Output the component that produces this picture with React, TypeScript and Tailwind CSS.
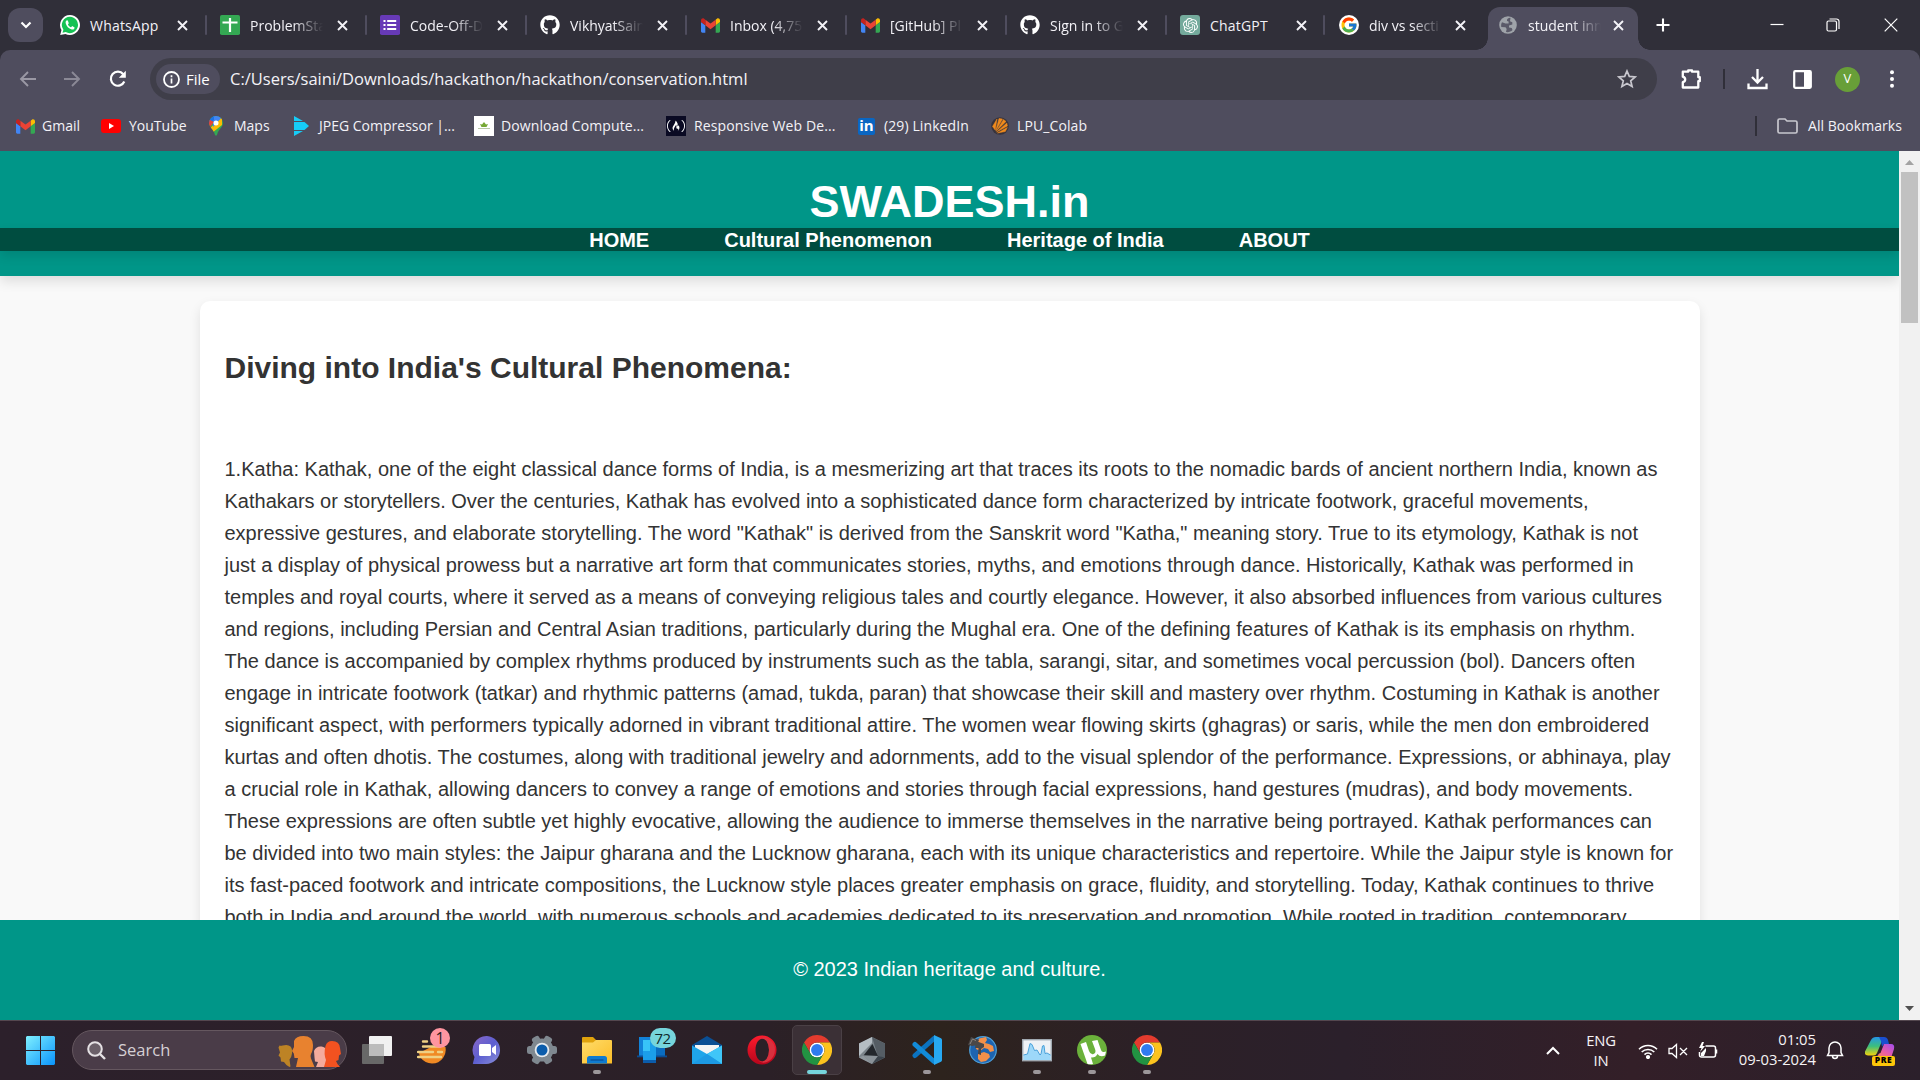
import type { ReactNode } from "react";
import { FaGithub } from "react-icons/fa";
import { FcGoogle } from "react-icons/fc";
import { SiFreecodecamp, SiOpenai } from "react-icons/si";

const LINES = [
  "1.Katha: Kathak, one of the eight classical dance forms of India, is a mesmerizing art that traces its roots to the nomadic bards of ancient northern India, known as",
  "Kathakars or storytellers. Over the centuries, Kathak has evolved into a sophisticated dance form characterized by intricate footwork, graceful movements,",
  'expressive gestures, and elaborate storytelling. The word "Kathak" is derived from the Sanskrit word "Katha," meaning story. True to its etymology, Kathak is not',
  "just a display of physical prowess but a narrative art form that communicates stories, myths, and emotions through dance. Historically, Kathak was performed in",
  "temples and royal courts, where it served as a means of conveying religious tales and courtly elegance. However, it also absorbed influences from various cultures",
  "and regions, including Persian and Central Asian traditions, particularly during the Mughal era. One of the defining features of Kathak is its emphasis on rhythm.",
  "The dance is accompanied by complex rhythms produced by instruments such as the tabla, sarangi, sitar, and sometimes vocal percussion (bol). Dancers often",
  "engage in intricate footwork (tatkar) and rhythmic patterns (amad, tukda, paran) that showcase their skill and mastery over rhythm. Costuming in Kathak is another",
  "significant aspect, with performers typically adorned in vibrant traditional attire. The women wear flowing skirts (ghagras) or saris, while the men don embroidered",
  "kurtas and often dhotis. The costumes, along with traditional jewelry and adornments, add to the visual splendor of the performance. Expressions, or abhinaya, play",
  "a crucial role in Kathak, allowing dancers to convey a range of emotions and stories through facial expressions, hand gestures (mudras), and body movements.",
  "These expressions are often subtle yet highly evocative, allowing the audience to immerse themselves in the narrative being portrayed. Kathak performances can",
  "be divided into two main styles: the Jaipur gharana and the Lucknow gharana, each with its unique characteristics and repertoire. While the Jaipur style is known for",
  "its fast-paced footwork and intricate compositions, the Lucknow style places greater emphasis on grace, fluidity, and storytelling. Today, Kathak continues to thrive",
  "both in India and around the world, with numerous schools and academies dedicated to its preservation and promotion. While rooted in tradition, contemporary",
];

/* ---------- brand icons ---------- */

const Gmail = () => (
  <svg className="w-[19px] h-[15px]" viewBox="52 42 88 66">
    <path fill="#4285f4" d="M58 108h14V74L52 59v43c0 3.32 2.69 6 6 6" />
    <path fill="#34a853" d="M120 108h14c3.32 0 6-2.69 6-6V59l-20 15" />
    <path fill="#fbbc04" d="M120 48v26l20-15v-8c0-7.42-8.47-11.65-14.4-7.2" />
    <path fill="#ea4335" d="M72 74V48l24 18 24-18v26L96 92" />
    <path fill="#c5221f" d="M52 51v8l20 15V48l-5.6-4.2c-5.94-4.45-14.4-.22-14.4 7.2" />
  </svg>
);

const Chrome = () => (
  <svg className="size-[30px]" viewBox="0 0 48 48">
    <circle cx="24" cy="24" r="12" fill="#fff" />
    <path fill="#e33b2e" d="M24 12H44.78a23.99 23.99 0 0 0-41.56 0L13.61 30l.01 0A11.98 11.98 0 0 1 24 12Z" />
    <path fill="#fcc31e" d="M34.39 30 24 48A23.99 23.99 0 0 0 44.78 12H24A11.98 11.98 0 0 1 34.39 30Z" />
    <path fill="#229342" d="M13.61 30 3.22 12A23.99 23.99 0 0 0 24 48L34.39 30a11.98 11.98 0 0 1-20.78 0Z" />
    <circle cx="24" cy="24" r="9.5" fill="#2f7bf0" />
  </svg>
);

const WhatsApp = () => (
  <svg className="size-5" viewBox="0 0 20 20">
    <path fill="#fff" d="M10 0a10 10 0 1 1-4.6 18.9L.2 20l1.3-4.9A10 10 0 0 1 10 0Z" />
    <path fill="#16c254" d="M10 1.7a8.2 8.2 0 1 1-4.3 15.3L2.5 17.8l.9-3A8.3 8.3 0 0 1 10 1.7Z" />
    <path fill="#fff" d="M6.9 5.3c-.9.5-1.5 1.5-1.2 2.9.7 3 3 5.3 6 6.2 1.7.5 2.9-.6 2.9-2l-2.4-1.3-1.1 1.2c-1.4-.6-2.5-1.6-3.2-2.9l.9-1.1-1-2.7Z" />
  </svg>
);

const Sheets = () => (
  <svg className="size-5" viewBox="0 0 20 20">
    <rect width="20" height="20" rx="1.8" fill="#34a853" />
    <path d="M10 3v14M2.5 7.5h15" stroke="#fff" strokeWidth="2.2" />
  </svg>
);

const Forms = () => (
  <svg className="size-5" viewBox="0 0 20 20">
    <rect width="20" height="20" rx="1.8" fill="#673ab7" />
    <path d="M7.2 6h9M7.2 10h9M7.2 14h9M3.5 6h2M3.5 10h2M3.5 14h2" stroke="#fff" strokeWidth="1.9" />
  </svg>
);

const GPT = () => (
  <span className="flex size-5 items-center justify-center rounded-[3px] bg-[#74aa9c]">
    <SiOpenai className="size-[15px] text-white" />
  </span>
);

const Google = () => (
  <span className="flex size-5 items-center justify-center rounded-full bg-white">
    <FcGoogle className="size-[18px]" />
  </span>
);

const Globe = () => (
  <svg className="size-[18px]" viewBox="0 0 18 18">
    <circle cx="9" cy="9" r="8.8" fill="#9fa3a9" />
    <path fill="#4f4d5e" d="M11.5 1.8C9 1.8 7.5 3.5 8 5l1.6.6v2H6.5L3 6.3C2 8 2 9.5 2.3 11l4.2.2 1.2 1.8-.7 3c2.5.5 5-.3 6.5-2l-.8-2-2.7-.6V9.400l3.300-1V6.200l-2.300-1Z" opacity=".85" />
  </svg>
);

const CloseX = () => (
  <svg className="size-[11px]" viewBox="0 0 11 11">
    <path d="M1 1l9 9M10 1l-9 9" stroke="#f3f2f7" strokeWidth="1.9" />
  </svg>
);

/* ---------- tab strip ---------- */

type Tab = { title: string; icon: ReactNode; full?: boolean };

const TABS: Tab[] = [
  { title: "WhatsApp", icon: <WhatsApp />, full: true },
  { title: "ProblemSta", icon: <Sheets /> },
  { title: "Code-Off-D", icon: <Forms /> },
  { title: "VikhyatSain", icon: <FaGithub className="size-5 text-white" /> },
  { title: "Inbox (4,75", icon: <Gmail /> },
  { title: "[GitHub] Pl", icon: <Gmail /> },
  { title: "Sign in to G", icon: <FaGithub className="size-5 text-white" /> },
  { title: "ChatGPT", icon: <GPT />, full: true },
];

const FADE = "[mask-image:linear-gradient(to_right,black_43px,transparent_73px)]";

const TabItem = ({ tab }: { tab: Tab }) => (
  <div className="flex h-[50px] w-[160px] shrink-0 items-center">
    <span className="flex w-5 justify-center">{tab.icon}</span>
    <span className={"ml-2.5 w-[73px] whitespace-nowrap text-[14px] text-[#f3f2f7] " + (tab.full ? "tracking-[0.2px]" : FADE)}>{tab.title}</span>
    <span className={tab.title === "ChatGPT" ? "ml-[13px] mr-px" : "ml-[14px]"}><CloseX /></span>
    <span className={"h-5 w-[2px] rounded bg-[#4f4d5e] " + (tab.title === "ChatGPT" ? "ml-[15px]" : "ml-[17px]")} />
  </div>
);

const TabStrip = () => (
  <div className="flex h-[50px] bg-[#302f39] pl-2">
    <div className="mt-2 flex h-[34px] w-[35px] items-center justify-center rounded-xl bg-[#4f4d5e]">
      <svg className="h-[8px] w-[12px]" viewBox="0 0 12 8">
        <path d="M1.5 1.5 6 6l4.5-4.5" fill="none" stroke="#fff" strokeWidth="2.2" />
      </svg>
    </div>
    <div className="ml-[17px] flex">
      {TABS.map((t, i) => (
        <TabItem key={i} tab={t} />
      ))}
      <div className="flex h-[50px] w-[136px] shrink-0 items-center">
        <span className="-ml-px"><Google /></span>
        <span className={"ml-2.5 w-[73px] whitespace-nowrap text-[14px] text-[#f3f2f7] " + FADE}>div vs secti</span>
        <span className="ml-[13px]"><CloseX /></span>
      </div>
    </div>
    <div className="flex h-[50px] w-[174px] items-end">
      <span className="h-3 w-3 bg-[radial-gradient(circle_at_0_0,transparent_11.5px,#4f4d5e_12px)]" />
      <div className="flex h-[43px] w-[150px] items-center rounded-t-xl bg-[#4f4d5e] pb-[7px] pl-[11px]">
        <Globe />
        <span className={"ml-[11px] w-[73px] whitespace-nowrap text-[14px] text-[#f3f2f7] " + FADE}>student inn</span>
        <span className="ml-[12px]"><CloseX /></span>
      </div>
      <span className="h-3 w-3 bg-[radial-gradient(circle_at_100%_0,transparent_11.5px,#4f4d5e_12px)]" />
    </div>
    <div className="flex h-[50px] items-center">
      <svg className="ml-[6px] size-[14px]" viewBox="0 0 14 14">
        <path d="M7 .5v13M.5 7h13" stroke="#fff" strokeWidth="2.1" />
      </svg>
      <svg className="ml-[100px] size-[14px]" viewBox="0 0 14 14">
        <path d="M.5 6.5h13" stroke="#fff" strokeWidth="1.2" />
      </svg>
      <svg className="ml-[42px] size-[14px]" viewBox="0 0 14 14" fill="none" stroke="#fff" strokeWidth="1.2">
        <rect x="1" y="3" width="9.5" height="10" rx="1.5" />
        <path d="M3.5 1h7a2.5 2.5 0 0 1 2.5 2.5v7.5" />
      </svg>
      <svg className="ml-[44px] size-[14px]" viewBox="0 0 14 14">
        <path d="M.7.7l12.6 12.6M13.3.7.7 13.3" stroke="#fff" strokeWidth="1.2" />
      </svg>
    </div>
  </div>
);

/* ---------- toolbar ---------- */

const Toolbar = () => (
  <div className="flex h-[58px] items-center pl-[19px]">
    <svg className="size-[18px]" viewBox="0 0 18 18" fill="none" stroke="#9a98a4" strokeWidth="1.9">
      <path d="M17 9H2M9 2 2 9l7 7" />
    </svg>
    <svg className="ml-[26px] size-[18px]" viewBox="0 0 18 18" fill="none" stroke="#8b8996" strokeWidth="1.9">
      <path d="M1 9h15M9 2l7 7-7 7" />
    </svg>
    <svg className="ml-[28px] size-[18px]" viewBox="0 0 18 18">
      <path d="M15.3 11.5A7 7 0 1 1 14.3 4.3" fill="none" stroke="#fff" strokeWidth="2.2" />
      <path d="M16.8.8v7h-7Z" fill="#fff" />
    </svg>
    <div className="ml-[23px] flex h-[42px] w-[1507px] items-center rounded-full bg-[#3f3e49] pl-[6px]">
      <div className="flex h-[30px] w-[64px] items-center rounded-full bg-[#4f4d5e] pl-[7px]">
        <svg className="size-[17px]" viewBox="0 0 17 17">
          <circle cx="8.5" cy="8.5" r="7.5" fill="none" stroke="#fff" strokeWidth="1.8" />
          <path d="M8.5 7.5v5M8.5 4.2v2" stroke="#fff" strokeWidth="1.7" />
        </svg>
        <span className="ml-[6px] text-[15px] font-medium leading-none text-white">File</span>
      </div>
      <span className="ml-[10px] w-[1387px] whitespace-nowrap text-[16.5px] text-[#f3f2f7]">C:/Users/saini/Downloads/hackathon/hackathon/conservation.html</span>
      <svg className="size-5 shrink-0" viewBox="0 0 20 20">
        <path d="M10 2l2.3 5.4 5.9.5-4.5 3.9 1.4 5.7L10 14.5l-5.1 3 1.4-5.7L1.8 7.9l5.9-.5Z" fill="none" stroke="#c8c7ce" strokeWidth="1.7" />
      </svg>
    </div>
    <svg className="ml-[23px] size-[24px]" viewBox="0 0 24 24" fill="none" stroke="#fff" strokeWidth="2.3" strokeLinejoin="round">
      <path d="M2.8 4.7h5.4V3.4h3.8v1.3h6.3v5.5h1.5v4h-1.5v6.3H2.8v-5.3c3.2-1 3.2-4.500 0-5.500Z" />
    </svg>
    <span className="ml-[19px] h-5 w-[2px] bg-[#302f39]" />
    <svg className="ml-[22px] size-[21px]" viewBox="0 0 21 21" fill="none" stroke="#fff" strokeWidth="2.3">
      <path d="M10.5 0v13M5 8l5.5 5.5L16 8M1.5 14.5V19h18v-4.5" />
    </svg>
    <svg className="ml-[25px] h-[19px] w-[19px]" viewBox="0 0 19 19">
      <rect x="1.2" y="1.2" width="16.6" height="16.6" rx="1" fill="none" stroke="#fff" strokeWidth="2.2" />
      <path fill="#fff" d="M11 1h7v17h-7Z" />
    </svg>
    <span className="ml-[23px] flex size-[25px] items-center justify-center rounded-full bg-[#689f38] text-[13px] text-white">V</span>
    <svg className="ml-[30px] h-[18px] w-[4px]" viewBox="0 0 4 18" fill="#fff">
      <circle cx="2" cy="2.2" r="2" /><circle cx="2" cy="9" r="2" /><circle cx="2" cy="15.8" r="2" />
    </svg>
  </div>
);

const BM: { label: string; w: string; iw: string; icon: ReactNode }[] = [
  { label: "Gmail", w: "w-[85px]", iw: "w-[26px]", icon: <Gmail /> },
  {
    label: "YouTube", w: "w-[108px]", iw: "w-[28px]",
    icon: <svg className="h-[14px] w-5" viewBox="0 0 20 14"><rect width="20" height="14" rx="3" fill="#f00" /><path d="M8 4v6l5-3Z" fill="#fff" /></svg>,
  },
  {
    label: "Maps", w: "w-[85px]", iw: "w-[25px]",
    icon: (
      <svg className="h-5 w-[14px]" viewBox="0 0 14 20">
        <clipPath id="pin"><path d="M7 0a7 7 0 0 1 7 7c0 4.5-5 6.5-5.8 11.5L7 20l-1.2-1.5C5 13.5 0 11.5 0 7a7 7 0 0 1 7-7Z" /></clipPath>
        <g clipPath="url(#pin)">
          <path fill="#34a853" d="M0 0h14v20H0Z" />
          <path fill="#fbbc04" d="M0 13 13 1v8L3 17Z" />
          <path fill="#4285f4" d="M4 0h10L4 11Z" />
          <path fill="#1a73e8" d="M0 0h5v4L0 8Z" />
          <path fill="#ea4335" d="M0 3.5 5 6l-4 5-1-2Z" />
          <circle cx="7" cy="7" r="2.5" fill="#fff" />
        </g>
      </svg>
    ),
  },
  {
    label: "JPEG Compressor |...", w: "w-[180px]", iw: "w-[25px]",
    icon: <svg className="h-5 w-[15px]" viewBox="0 0 15 20"><path d="M0 0l9 5H0ZM0 6h10.5L15 10l-4.5 4H0ZM0 15h9l-9 5Z" fill="#16cdf8" /></svg>,
  },
  {
    label: "Download Compute...", w: "w-[192px]", iw: "w-[27px]",
    icon: <svg className="size-5" viewBox="0 0 20 20"><path fill="#fff" d="M0 0h20v20H0Z" /><path fill="#76a835" d="M6 8l2 .5L10 6l2 2.5L14 8l-1.5 3h-5Z" /><path stroke="#b9c9a8" d="M4 12.5h12" /></svg>,
  },
  {
    label: "Responsive Web De...", w: "w-[192px]", iw: "w-[28px]",
    icon: <span className="flex size-5 items-center justify-center bg-[#0a0a23]"><SiFreecodecamp className="size-[18px] text-white" /></span>,
  },
  {
    label: "(29) LinkedIn", w: "w-[133px]", iw: "w-[26px]",
    icon: <span className="flex size-[17px] items-center justify-center rounded-[2px] bg-[#0a66c2] pb-[2px] text-[15px] font-bold leading-none text-white">in</span>,
  },
  {
    label: "LPU_Colab", w: "w-[120px]", iw: "w-[26px]",
    icon: (
      <svg className="size-[18px]" viewBox="0 0 18 18">
        <circle cx="9" cy="9" r="8.8" fill="#37333c" />
        <path d="M1.5 9.5 6 2l-1.8 11ZM4.8 13.5 8 1.5l3.5.5ZM5.2 14.2 12.5 2.5 15 4.5ZM5.7 15 15.8 6l.6 3ZM6.5 16l9.8-5.5-2 4Z" fill="#f08a1c" stroke="#f08a1c" strokeWidth=".5" />
      </svg>
    ),
  },
];

const Bookmarks = () => (
  <div className="flex h-[36px] items-center pl-4 text-[14px] text-[#f3f2f7]">
    {BM.map((b, i) => (
      <div key={b.label} className={"flex shrink-0 items-center whitespace-nowrap " + b.w}>
        <span className={"flex shrink-0 items-center " + b.iw}>{b.icon}</span>
        <span className={"mb-[2px] " + (i >= 4 ? "tracking-[0.1px]" : "")}>{b.label}</span>
      </div>
    ))}
    <div className="ml-auto flex items-center pr-[17px]">
      <span className="h-5 w-[2px] bg-[#302f39]" />
      <svg className="ml-[20px] h-[16px] w-[21px]" viewBox="0 0 21 16">
        <path d="M1 2.5A1.5 1.5 0 0 1 2.5 1H8l2 2h8.5A1.5 1.5 0 0 1 20 4.5v9a1.5 1.5 0 0 1-1.5 1.5h-16A1.5 1.5 0 0 1 1 13.5Z" fill="none" stroke="#c8c7ce" strokeWidth="1.7" />
      </svg>
      <span className="mb-[2px] ml-[10px] w-[95px] whitespace-nowrap tracking-[0.05px]">All Bookmarks</span>
    </div>
  </div>
);

/* ---------- web page ---------- */

const Page = () => (
  <div className="flex h-[869px]">
    <div className="flex w-[1899px] flex-col overflow-hidden bg-[#f9f9f9] font-['Liberation_Sans',Arial,sans-serif]">
      <header className="relative h-[125px] shrink-0 bg-[#009688] text-white shadow-[0_5px_12px_rgba(0,0,0,0.12)]">
        <h1 className="pt-[25px] text-center text-[45px] font-bold leading-[52px]">SWADESH.in</h1>
        <nav className="flex h-[23px] justify-center gap-[75px] bg-[#004d40] text-[20px] font-bold leading-[25px] shadow-[0_5px_12px_rgba(0,0,0,0.12)]">
          <span>HOME</span>
          <span>Cultural Phenomenon</span>
          <span>Heritage of India</span>
          <span>ABOUT</span>
        </nav>
      </header>
      <main className="min-h-0 flex-1 overflow-hidden pt-[25px]">
        <article className="ml-[200px] h-[1200px] w-[1500px] rounded-[10px] bg-white px-[24.5px] pt-[43px] text-[#333] shadow-[0_5px_12px_rgba(0,0,0,0.1)]">
          <h2 className="text-[30px] font-bold leading-[48px]">Diving into India's Cultural Phenomena:</h2>
          <div className="mt-[61px] text-[20px] leading-[32px]">
            {LINES.map((l, i) => (
              <p key={i} className="whitespace-nowrap">{l}</p>
            ))}
          </div>
        </article>
      </main>
      <footer className="relative flex h-[100px] shrink-0 items-center justify-center bg-[#009688] pb-[2px] text-[20px] text-white">
        © 2023 Indian heritage and culture.
      </footer>
    </div>
    <div className="flex w-[21px] flex-col items-center bg-[#f1f1f1]">
      <svg className="mt-[9px] h-[5px] w-[9px]" viewBox="0 0 9 5"><path d="M4.5 0 9 5H0Z" fill="#a3a3a3" /></svg>
      <div className="mt-[7px] h-[151px] w-[17px] bg-[#c1c1c1]" />
      <svg className="mb-[9px] mt-auto h-[5px] w-[9px]" viewBox="0 0 9 5"><path d="M4.5 5 9 0H0Z" fill="#505050" /></svg>
    </div>
  </div>
);

/* ---------- taskbar ---------- */

const TaskItem = ({ children, mark }: { children: ReactNode; mark?: "open" | "active" }) => (
  <div className={"relative mx-[2.5px] mt-[4px] flex h-[50px] w-[50px] items-center justify-center rounded-[5px] " + (mark === "active" ? "border border-[#4a4045] bg-[#3b3036]" : "")}>
    {children}
    {mark === "open" && <span className="absolute bottom-[1px] h-[4px] w-[8px] rounded-full bg-[#9c979a]" />}
    {mark === "active" && <span className="absolute bottom-0 h-[4px] w-[20px] rounded-full bg-[#76d5dc]" />}
  </div>
);

const Taskbar = () => (
  <div className="flex h-[60px] border-t border-[#54474f] bg-[linear-gradient(90deg,#2c202b_0%,#2b2027_40%,#2d231d_49%,#2c2027_60%,#2b202b_70%,#331f28_85%,#2b202b_100%)]">
    <svg className="ml-[26px] mt-[15px] size-[29px]" viewBox="0 0 29 29">
      <defs>
        <linearGradient id="win" x1="0" y1="0" x2="1" y2="1"><stop stopColor="#7ff0ff" /><stop offset="1" stopColor="#0a93fb" /></linearGradient>
      </defs>
      <path d="M1 0h13v14H0V1ZM15 0h13l1 1v13H15ZM0 15h14v14H1l-1-1ZM15 15h14v13l-1 1H15Z" fill="url(#win)" />
    </svg>
    <div className="ml-[17px] mt-[9px] flex h-[40px] w-[275px] items-center rounded-full border border-[#65575f] bg-[#4a3c48] pl-[14px]">
      <svg className="size-[19px]" viewBox="0 0 19 19" fill="none" stroke="#e5e1e4" strokeWidth="2">
        <circle cx="8" cy="8" r="6.8" fill="#6b6069" /><path d="m13 13 5 5" strokeWidth="2.4" />
      </svg>
      <span className="ml-[12px] mt-px text-[16.5px] text-[#d6d0d4]">Search</span>
      <svg className="ml-auto mr-[5px] mt-[4px] h-[32px] w-[63px]" viewBox="0 0 63 32">
        <path fill="#bd8325" d="M1.5 9.5q1.5.5 3 0Q10 8 12.5 10.5q2 2 1.5 7-.5 4-2.5 6l1 7-1 .5q-3-1-5.5-5l-3-.5-.5-4-2-2 1.5-3-1.5-5Z" />
        <path fill="#e8822f" d="M16 5q2-5 9.5-5Q35 0 35 9q0 6-2 9-1 2 0 4.5l3.5 8.5H18l2-9h-3.5l-.7-4.5L14 15l2-4Z" />
        <path fill="#f4ab9c" d="M36 15q2-5 7.5-4.5 4 .5 5 4V31H38l2-5-3-.5-.5-4Z" />
        <path fill="#f25220" d="M47.5 10Q49 5 54 5q7.5 0 8 7l1 6-2 1.5-.5 4.5-2.5 1 1.5 3 2.5 3H46l2-7q-2.5-6-.5-14Z" />
      </svg>
    </div>
    <div className="ml-[2px] flex">
      <TaskItem>
        <svg className="size-[30px]" viewBox="0 0 30 30">
          <rect x="7" y="1" width="23" height="20" rx="1" fill="#f1f1f1" />
          <rect y="9" width="22" height="20" rx="1" fill="#686868" />
          <path d="M7 9h15v12H7Z" fill="#bcbcbc" />
        </svg>
      </TaskItem>
      <TaskItem>
        <svg className="size-[30px]" viewBox="0 0 30 30">
          <path d="M2 18 14 12h14.500q1 6-2.500 11-4 5.500-11 5.500T3 22Z" fill="#f08a24" />
          <path d="M6 6.500h4M6 11.500h17M1 17h15M21 17h4M1 22h23" stroke="#efd083" strokeWidth="2.400" strokeLinecap="round" />
        </svg>
        <span className="absolute left-[23.5px] top-[3px] flex size-[20px] items-center justify-center rounded-full bg-[#ff95a0] text-[16px] leading-none text-[#2a1c20]">1</span>
      </TaskItem>
      <TaskItem>
        <svg className="size-[30px]" viewBox="0 0 30 30">
          <defs><linearGradient id="chat" x1="0" y1="0" x2="1" y2="1"><stop stopColor="#8a68c8" /><stop offset=".5" stopColor="#5d5fd0" /><stop offset="1" stopColor="#8a90d8" /></linearGradient></defs>
          <path d="M15 1a14 14 0 1 1-2 28H1.5q-1 0-.5-1l1.5-6A14 14 0 0 1 15 1Z" fill="url(#chat)" />
          <rect x="7" y="9" width="12" height="12" rx="1.5" fill="#fff" /><path d="M20 13 24 10v10l-4-3Z" fill="#fff" />
        </svg>
      </TaskItem>
      <TaskItem>
        <svg className="size-[30px]" viewBox="0 0 30 30">
          <g fill="#7f8890">
            <circle cx="15" cy="15" r="11.5" />
            <rect x="0" y="11" width="30" height="8" rx="2.5" />
            <rect x="0" y="11" width="30" height="8" rx="2.5" transform="rotate(60 15 15)" />
            <rect x="0" y="11" width="30" height="8" rx="2.5" transform="rotate(120 15 15)" />
          </g>
          <circle cx="15" cy="15" r="7.3" fill="#e7ebef" /><circle cx="15" cy="15" r="5.5" fill="#0b5cab" />
        </svg>
      </TaskItem>
      <TaskItem mark="open">
        <svg className="size-[30px]" viewBox="0 0 30 30">
          <defs><linearGradient id="fold" x1="0" y1="0" x2="1" y2="1"><stop stopColor="#ffdc6a" /><stop offset="1" stopColor="#fbbd28" /></linearGradient></defs>
          <path d="M0 3q0-1 1-1h10l3 3v5H0Z" fill="#e0a20c" />
          <path d="M0 7.5h11l3-2.5h15q1 0 1 1V28.5H0Z" fill="url(#fold)" />
          <path d="M5 28.5v-5q0-2.5 2.5-2.5h15q2.5 0 2.5 2.5v5Z" fill="#0f7bd0" /><path d="M8.5 25h13" stroke="#0a4d94" strokeWidth="1.2" />
        </svg>
      </TaskItem>
      <TaskItem>
        <svg className="size-[30px]" viewBox="0 0 30 30">
          <path d="M2 2h16v19H2Z" fill="#1282d8" /><path d="M16 12h12v9H16Z" fill="#0a6cc0" /><path d="M0 20.5h30v1.8H0Z" fill="#0a4d94" />
          <path d="M6 5h13v23H6Z" fill="#1b9fea" /><path d="M6 5h7v11H6Z" fill="#38c4f8" /><path d="M6 25h13v3H6Z" fill="#0b5cab" />
        </svg>
        <span className="absolute left-[23px] top-[3px] flex h-[20px] w-[26px] items-center justify-center rounded-full bg-[#76d5dc] text-[15px] leading-none tracking-[-0.5px] text-[#10282b]">72</span>
      </TaskItem>
      <TaskItem>
        <svg className="size-[30px]" viewBox="0 0 30 30">
          <path d="M0 10 15 1l15 9v4H0Z" fill="#0a4f94" /><path d="M3 10h24v10H3Z" fill="#f4f4f4" />
          <path d="M0 10.5 15 19 30 10.5V29H0Z" fill="#1fa5ea" /><path d="M15 19 30 10.5V29Z" fill="#3fc6f8" /><path d="M0 29 15 19l15 10Z" fill="#1d9ae4" />
        </svg>
      </TaskItem>
      <TaskItem>
        <svg className="size-[30px]" viewBox="0 0 30 30">
          <defs><linearGradient id="op" x1="0" y1="0" x2="0" y2="1"><stop stopColor="#ff1b2d" /><stop offset="1" stopColor="#b5051b" /></linearGradient></defs>
          <path fillRule="evenodd" fill="url(#op)" d="M15 .5a14.5 14.5 0 1 1 0 29 14.5 14.5 0 0 1 0-29ZM16 3.5c-4.500 0-7.500 5-7.500 11.500s3 11.500 7.500 11.500S22 21 22 15 20.500 3.500 16 3.500Z" />
          <path fill="#d9303e" d="M11 4.5Q16 .5 22 4q6 4 6 11t-6 11q-6 3.5-11-.5 5 2.5 8.5-1.5Q22 20 22 15T19.5 6Q16 2 11 4.500Z" />
        </svg>
      </TaskItem>
      <TaskItem mark="active"><Chrome /></TaskItem>
      <TaskItem>
        <svg className="size-[30px]" viewBox="0 0 30 30">
          <path d="M15 2 28 8.5v14L15 29 2 22.5v-14Z" fill="#7b848b" /><path d="M15 2 2 8.5V21L15 8Z" fill="#b5bdc3" /><path d="m15 2 13 6.5v14l-7-1Z" fill="#555d64" />
          <path d="M15.5 9 6.5 20.5l14.5.5Z" fill="#23272c" /><path d="M2 22.5 6.5 20.5 15 29Z" fill="#8f979d" /><path d="M6.5 20.5 21 21l-6 8Z" fill="#8a9298" /><path d="m15 29 13-6.5-7-1.5Z" fill="#3c444c" />
        </svg>
      </TaskItem>
      <TaskItem mark="open">
        <svg className="size-[30px]" viewBox="0 0 30 30">
          <path d="M3 20.5 22 3.5" stroke="#0b73c0" strokeWidth="5" strokeLinecap="round" />
          <path d="M3 9.5 22 26.5" stroke="#128bd8" strokeWidth="5" strokeLinecap="round" />
          <path d="M22 0l7 3.3q1 .5 1 1.7v20q0 1.2-1 1.7L22 30Z" fill="#27a9f2" />
        </svg>
      </TaskItem>
      <TaskItem>
        <svg className="size-[30px]" viewBox="0 0 30 30">
          <circle cx="16" cy="15" r="13.3" fill="#1d64b0" stroke="#4d9fd8" strokeWidth="1.2" />
          <path d="M12 3.5 19 2l1 3-2 3 4 1 4 2 1 5-4 1-2-3-4-1-4 3-4-2 1-6ZM11 19l6-2 5 2 1 3-4 4-5 1-3-3Z" fill="#f3904a" />
          <path d="M1 10 4 2l8 3-2 5-5 1ZM9 6l8 3v3l-3 2v6l-3-1 .5-6L8 13Z" fill="#4b4848" />
          <path d="m3 9 2.5-5L9 5.5" fill="none" stroke="#8d8784" strokeWidth="1" />
        </svg>
      </TaskItem>
      <TaskItem mark="open">
        <svg className="size-[30px]" viewBox="0 0 30 30">
          <rect x=".7" y="4.7" width="28.6" height="21" fill="#eef2f6" stroke="#a0a9b1" strokeWidth="1.4" />
          <path d="M1.5 20l4-1L8 8.5l2 1 2.5 6 2.5-.5 3 5 1-1 1.5-8 1.5-.5 1 8 2-.5 3.5 2V25h-27Z" fill="#9dd8f9" />
          <path d="M1.5 20l4-1L8 8.5l2 1 2.5 6 2.5-.5 3 5 1-1 1.5-8 1.5-.5 1 8 2-.5 3.5 2" fill="none" stroke="#3e9ad6" strokeWidth=".9" />
        </svg>
      </TaskItem>
      <TaskItem mark="open">
        <svg className="size-[30px]" viewBox="0 0 30 30">
          <circle cx="15" cy="15" r="15" fill="#6bb13b" />
          <path d="M3.5 9 9 7l3 9q1.5 4 4.5 3t1.5-5l-3-8L20.5 5 24 15q.8 2.5 3 2l2-.5-1 4q-5 2-7.500-1.500-2 4-6.500 3.500l2 6.500q-3 .5-5.500 0Z" fill="#fff" />
        </svg>
      </TaskItem>
      <TaskItem mark="open"><Chrome /></TaskItem>
    </div>
    <div className="ml-auto flex h-[59px] items-center text-[14.8px] text-[#f6f3f5]">
      <svg className="h-[9px] w-[14px]" viewBox="0 0 14 9"><path d="M1 8l6-6 6 6" fill="none" stroke="#fff" strokeWidth="2" /></svg>
      <div className="ml-[26px] w-[30px] pb-[2px] text-center leading-[20px] tracking-[-0.2px]">ENG<br />IN</div>
      <svg className="ml-[22px] h-[16px] w-[20px]" viewBox="0 0 20 16" fill="none" stroke="#fff" strokeWidth="1.6">
        <path d="M1 6.3a12.5 12.5 0 0 1 18 0M3.7 9a9 9 0 0 1 12.6 0M6.5 11.6a5 5 0 0 1 7 0" /><circle cx="10" cy="14" r="1.3" fill="#fff" />
      </svg>
      <svg className="ml-[10px] h-[16px] w-[20px]" viewBox="0 0 20 16" fill="none" stroke="#fff" strokeWidth="1.3">
        <path d="M1 5.5h3L8.5 1.5v13L4 10.5H1ZM12 5l7 7M19 5l-7 7" />
      </svg>
      <svg className="ml-[10px] h-[18px] w-[20px]" viewBox="0 0 20 18" fill="none" stroke="#fff" strokeWidth="1.5">
        <path d="M7.5 4h8q2 0 2 2v7q0 2-2 2h-12q-2 0-2-2v-3M18.5 7.5v4" /><path d="M4 0 1 6h2.5L2 10l5-6H4.5L6 0ZM3 14v-3l5-5v3l-2 5Z" fill="#fff" stroke="none" />
      </svg>
      <div className="ml-[20px] w-[78px] whitespace-nowrap pb-[4px] text-right leading-[20px]">01:05<br />09-03-2024</div>
      <svg className="ml-[10px] h-[19px] w-[18px]" viewBox="0 0 18 19" fill="none" stroke="#fff" strokeWidth="1.5">
        <path d="M1.5 14.5 3 11.5V7a6 6 0 0 1 12 0v4.5l1.5 3ZM6.5 15a2.5 2.5 0 0 0 5 0" />
      </svg>
      <span className="relative ml-[21px] mr-[25px] size-[30px]">
        <svg className="size-[30px]" viewBox="0 0 30 30">
          <defs>
            <linearGradient id="cpA" x1="0" y1="0" x2="0" y2="1"><stop stopColor="#2596e8" /><stop offset=".5" stopColor="#3cbf7c" /><stop offset="1" stopColor="#f4d20c" /></linearGradient>
            <linearGradient id="cpB" x1="1" y1="0" x2="0" y2="1"><stop stopColor="#a04df0" /><stop offset=".5" stopColor="#e85ca8" /><stop offset="1" stopColor="#f98a4a" /></linearGradient>
          </defs>
          <path d="M6 4q1.5-3 5-3h8l-2 4-5 12q-1 2.5-3.5 2.5H3q-4 0-3-4Z" fill="url(#cpA)" />
          <path d="M14 1h5q3 0 4 3l1 4h-4q-2 0-3 3l-1-6Z" fill="#1a4fd0" />
          <path d="M19 8h7q4 0 3 5l-3 9H8q4 0 5-3 1-2 2.5-2Z" fill="url(#cpB)" />
        </svg>
        <span className="absolute bottom-0 left-[7px] flex h-[10px] w-[23px] items-center justify-center rounded-[2px] bg-[#fdc60a] text-[8.5px] font-extrabold leading-none tracking-[0.5px] text-black">PRE</span>
      </span>
    </div>
  </div>
);

export default function App() {
  return (
    <div className="flex h-[1080px] w-[1920px] flex-col overflow-hidden bg-[#302f39] font-['Open_Sans','Noto_Sans',sans-serif]">
      <TabStrip />
      <div className="h-[101px] rounded-t-[10px] bg-[#4f4d5e]">
        <Toolbar />
        <Bookmarks />
      </div>
      <Page />
      <Taskbar />
    </div>
  );
}
